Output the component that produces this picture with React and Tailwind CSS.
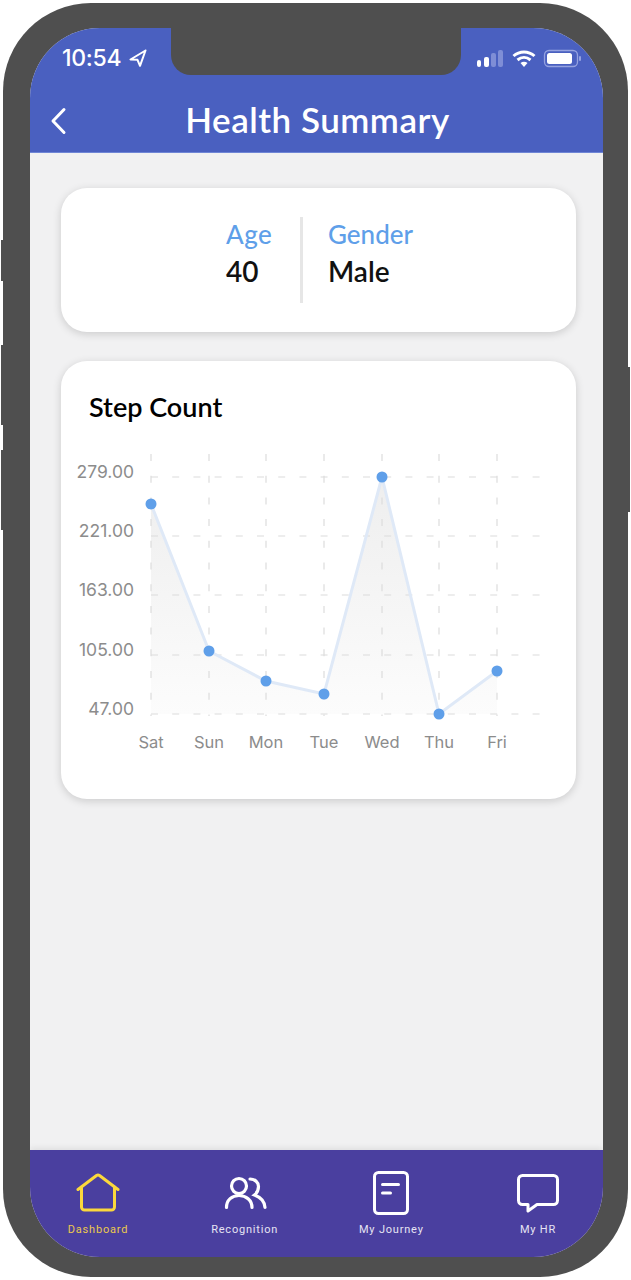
import { useId } from "react";

const NUNITO = "font-['Lato','Noto_Sans',sans-serif]";

const X_POS = [151, 209, 266, 324, 382, 439, 497];
const Y_GRID = [
  { y: 477, label: "279.00" },
  { y: 536, label: "221.00" },
  { y: 595, label: "163.00" },
  { y: 655, label: "105.00" },
  { y: 714, label: "47.00" },
];
const DAYS = ["Sat", "Sun", "Mon", "Tue", "Wed", "Thu", "Fri"];
const VALUES = [504, 651, 681, 694, 477, 714, 671];

function StepChart() {
  const gradId = useId();
  const points = X_POS.map((x, i) => `${x},${VALUES[i]}`).join(" ");
  return (
    <svg
      className="block"
      width="515"
      height="340"
      viewBox="61 440 515 340"
      fontFamily="Inter, sans-serif"
    >
      <defs>
        <linearGradient id={gradId} x1="0" y1="0" x2="0" y2="1">
          <stop offset="0" stopColor="#eeeeee" />
          <stop offset="1" stopColor="#fcfcfc" />
        </linearGradient>
      </defs>
      <polygon points={`151,714 ${points} 497,714`} fill={`url(#${gradId})`} />
      {X_POS.map((x) => (
        <line key={x} x1={x} x2={x} y1="454" y2="716" stroke="#dcdcdc" strokeWidth="1.2" strokeDasharray="7 14.7" />
      ))}
      {Y_GRID.map((g) => (
        <line key={g.y} x1="151" x2="541" y1={g.y} y2={g.y} stroke="#dcdcdc" strokeWidth="1.2" strokeDasharray="7 14.2" />
      ))}
      <polyline points={points} fill="none" stroke="#dfe9f7" strokeWidth="3" />
      {X_POS.map((x, i) => (
        <circle key={x} cx={x} cy={VALUES[i]} r="5.5" fill="#5f9fe9" />
      ))}
      {Y_GRID.map((g) => (
        <text key={g.y} x="134" y={g.y + 1} fontSize="17.5" fill="#8c8c8c" textAnchor="end">
          {g.label}
        </text>
      ))}
      {DAYS.map((d, i) => (
        <text key={d} x={X_POS[i]} y="748" fontSize="16.5" fill="#8c8c8c" textAnchor="middle">
          {d}
        </text>
      ))}
    </svg>
  );
}

function StatusBar() {
  return (
    <div className="h-[48px] pt-[16px] flex justify-between items-start text-white">
      <div className="flex items-center ml-[32px] h-[28px]">
        <span className="font-['Inter',sans-serif] text-[23px] leading-[28px] font-medium tracking-[-0.3px]">10:54</span>
        <svg className="ml-[8px]" width="18" height="18" viewBox="0 0 18 18" fill="none" stroke="white" strokeWidth="2" strokeLinejoin="round">
          <path d="M16.500 1.500 1.500 10.500 8.500 10.800 11 16.800Z" />
        </svg>
      </div>
      <svg className="mr-[21px] mt-[4px]" width="105" height="20" viewBox="0 0 105 20" fill="none">
        <rect x="0" y="12" width="4" height="7" rx="2" fill="white" />
        <rect x="7" y="9" width="5" height="10" rx="2" fill="white" />
        <rect x="14" y="5" width="5" height="14" rx="2" fill="#7f8ed6" />
        <rect x="21" y="2" width="5" height="17" rx="2" fill="#7f8ed6" />
        <path d="M36.500 8c6-5.500 15-5.500 21 0" stroke="white" strokeWidth="3" />
        <path d="M40.500 12c4-3.300 9-3.300 13 0" stroke="white" strokeWidth="3" />
        <path d="M43.500 15 47 19l3.500-4c-2-1.600-5-1.600-7 0Z" fill="white" />
        <rect x="67.500" y="2.500" width="33" height="16" rx="4.500" stroke="#95a2e0" strokeWidth="1.300" />
        <rect x="70" y="5" width="25" height="11" rx="2.500" fill="white" />
        <rect x="102" y="8" width="2" height="5" rx="1" fill="#95a2e0" />
      </svg>
    </div>
  );
}

function TabItem({ label, active, children }) {
  return (
    <div className="w-[100px] flex flex-col items-center">
      <div className="h-[48px] flex items-center justify-center">{children}</div>
      <span
        className={`mt-[6px] font-['Roboto',sans-serif] text-[11px] leading-[14px] tracking-[0.8px] ${
          active ? "text-[#ecc94c]" : "text-[#e6e4f3]"
        }`}
      >
        {label}
      </span>
    </div>
  );
}

// Health summary screen inside the phone frame
function App() {
  return (
    <div className="w-[631px] h-[1280px] bg-white p-[3px]">
      <div className="relative h-full rounded-[88px] bg-[#4f4f4f] pt-[25px] pl-[27px] pr-[25px] pb-[20px]">
        {/* Side buttons */}
        <div className="absolute -left-[2px] top-[237px] w-[2px] h-[41px] bg-[#4f4f4f]" />
        <div className="absolute -left-[2px] top-[342px] w-[2px] h-[80px] bg-[#4f4f4f]" />
        <div className="absolute -left-[2px] top-[447px] w-[2px] h-[80px] bg-[#4f4f4f]" />
        <div className="absolute -right-[2px] top-[364px] w-[2px] h-[145px] bg-[#4f4f4f]" />

        <div className="relative h-full rounded-[70px] overflow-hidden bg-[#f1f1f2] flex flex-col">
          {/* Header */}
          <div className="h-[125px] bg-[#4a60c0] border-b border-[#6f86d6]">
            <StatusBar />
            <div className="relative h-[76px] flex items-center justify-center pt-[10px] pl-[2px]">
              <svg className="absolute left-[20px] top-[31px]" width="17" height="28" viewBox="0 0 17 28" fill="none" stroke="white" strokeWidth="3" strokeLinecap="round" strokeLinejoin="round">
                <path d="M14 2.500 3 14l11 11.500" />
              </svg>
              <h1 className={`${NUNITO} text-[35px] leading-[40px] font-semibold tracking-[0.5px] text-white`}>Health Summary</h1>
            </div>
          </div>

          {/* Notch */}
          <div className="absolute left-[141px] top-0 w-[290px] h-[47px] bg-[#4f4f4f] rounded-b-[20px]" />

          {/* Content */}
          <div className="flex-1 pl-[31px] pr-[27px] pt-[35px] flex flex-col gap-[29px]">
            <div className="h-[144px] rounded-[26px] bg-white shadow-[0_2px_8px_rgba(0,0,0,0.16)] flex pt-[29px]">
              <div className="ml-[165px] w-[47px] -mt-[1px]">
                <div className={`${NUNITO} text-[#5f9fe9] text-[26px] leading-[36px] font-medium tracking-[0.5px]`}>Age</div>
                <div className={`${NUNITO} text-[#111] text-[28px] leading-[39px] font-semibold`}>40</div>
              </div>
              <div className="ml-[27px] w-[3px] h-[86px] bg-[#e6e6e6]" />
              <div className="ml-[25px] -mt-[1px]">
                <div className={`${NUNITO} text-[#5f9fe9] text-[26px] leading-[36px] font-medium`}>Gender</div>
                <div className={`${NUNITO} text-[#111] text-[28px] leading-[39px] font-semibold`}>Male</div>
              </div>
            </div>

            <div className="h-[438px] rounded-[26px] bg-white shadow-[0_2px_8px_rgba(0,0,0,0.16)] pt-[31px]">
              <div className={`${NUNITO} pl-[28px] text-[27px] leading-[30px] font-semibold text-black`}>Step Count</div>
              <div className="mt-[18px]">
                <StepChart />
              </div>
            </div>
          </div>

          {/* Bottom tabs */}
          <div className="h-[107px] bg-[#4a3f9f] flex justify-between pl-[18px] pr-[15px] pt-[19px] shadow-[0_-2px_6px_rgba(0,0,0,0.08)]">
            <TabItem label="Dashboard" active>
              <svg width="44" height="40" viewBox="0 0 44 40" fill="none" stroke="#fbd83c" strokeWidth="3" strokeLinecap="round" strokeLinejoin="round">
                <path d="M2 16.500 20.500 2.500q1.500-1 3 0L42 16.500" />
                <path d="M5.500 14v20a3 3 0 0 0 3 3h27a3 3 0 0 0 3-3V14" />
              </svg>
            </TabItem>
            <TabItem label="Recognition">
              <svg width="44" height="36" viewBox="0 0 44 36" fill="none" stroke="white" strokeWidth="3.200" strokeLinecap="round">
                <circle cx="16" cy="11" r="7.500" />
                <path d="M3.500 32.500C3.500 25 9 20.500 16 20.500S29 25 29 32.500" />
                <path d="M27 4C32 4 35.500 7.500 35.500 11.500C35.500 15 34 18 31.500 20C37 22 41.500 26 42 32.500" />
              </svg>
            </TabItem>
            <TabItem label="My Journey">
              <svg width="36" height="44" viewBox="0 0 36 44" fill="none" stroke="white" strokeWidth="3" strokeLinecap="round">
                <rect x="1.500" y="1.500" width="33" height="41" rx="4" />
                <path d="M9.500 13.500h16" />
                <path d="M9.500 22h8" />
              </svg>
            </TabItem>
            <TabItem label="My HR">
              <svg width="44" height="40" viewBox="0 0 44 40" fill="none" stroke="white" strokeWidth="3" strokeLinejoin="round">
                <path d="M6.500 2.500h31a4 4 0 0 1 4 4v21a4 4 0 0 1-4 4H21l-9 6.500v-6.500H6.500a4 4 0 0 1-4-4v-21a4 4 0 0 1 4-4Z" />
              </svg>
            </TabItem>
          </div>
        </div>
      </div>
    </div>
  );
}

export default App;
